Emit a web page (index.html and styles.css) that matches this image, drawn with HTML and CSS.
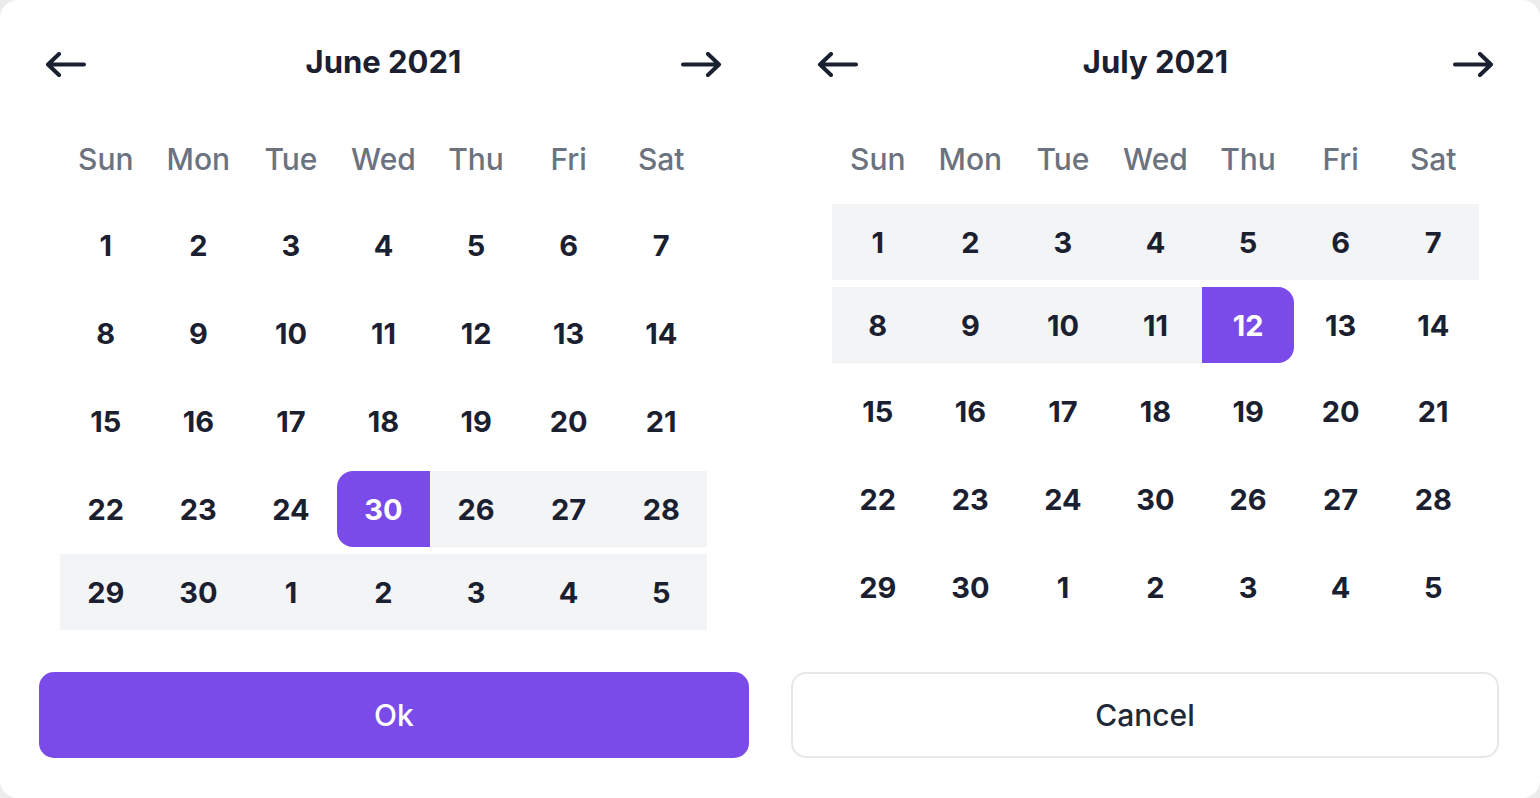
FILE: index.html
```html
<!DOCTYPE html>
<html lang="en">
<head>
<meta charset="utf-8">
<title>Date range picker</title>
<link rel="stylesheet" href="styles.css">
</head>
<body>
<div class="card">
  <div class="panels">
    <section class="panel">
      <header class="head">
        <button class="nav" aria-label="Previous month"><svg viewBox="0 0 42 25" width="42" height="25"><path d="M40 12.5H4M15 2L4 12.5L15 23" fill="none" stroke="#1a2030" stroke-width="4" stroke-linecap="round" stroke-linejoin="round"/></svg></button>
        <h2 class="title">June 2021</h2>
        <button class="nav" aria-label="Next month"><svg viewBox="0 0 42 25" width="42" height="25"><path d="M2 12.5H38M27 2L38 12.5L27 23" fill="none" stroke="#1a2030" stroke-width="4" stroke-linecap="round" stroke-linejoin="round"/></svg></button>
      </header>
      <div class="dows"><span>Sun</span><span>Mon</span><span>Tue</span><span>Wed</span><span>Thu</span><span>Fri</span><span>Sat</span></div>
      <div class="weeks">
        <div class="week"><span>1</span><span>2</span><span>3</span><span>4</span><span>5</span><span>6</span><span>7</span></div>
        <div class="week"><span>8</span><span>9</span><span>10</span><span>11</span><span>12</span><span>13</span><span>14</span></div>
        <div class="week"><span>15</span><span>16</span><span>17</span><span>18</span><span>19</span><span>20</span><span>21</span></div>
        <div class="week range-week"><span>22</span><span>23</span><span>24</span><span class="sel start">30</span><span class="in">26</span><span class="in">27</span><span class="in">28</span></div>
        <div class="week range-week"><span class="in">29</span><span class="in">30</span><span class="in">1</span><span class="in">2</span><span class="in">3</span><span class="in">4</span><span class="in">5</span></div>
      </div>
    </section>
    <section class="panel">
      <header class="head">
        <button class="nav" aria-label="Previous month"><svg viewBox="0 0 42 25" width="42" height="25"><path d="M40 12.5H4M15 2L4 12.5L15 23" fill="none" stroke="#1a2030" stroke-width="4" stroke-linecap="round" stroke-linejoin="round"/></svg></button>
        <h2 class="title">July 2021</h2>
        <button class="nav" aria-label="Next month"><svg viewBox="0 0 42 25" width="42" height="25"><path d="M2 12.5H38M27 2L38 12.5L27 23" fill="none" stroke="#1a2030" stroke-width="4" stroke-linecap="round" stroke-linejoin="round"/></svg></button>
      </header>
      <div class="dows"><span>Sun</span><span>Mon</span><span>Tue</span><span>Wed</span><span>Thu</span><span>Fri</span><span>Sat</span></div>
      <div class="weeks july">
        <div class="week range-week"><span class="in">1</span><span class="in">2</span><span class="in">3</span><span class="in">4</span><span class="in">5</span><span class="in">6</span><span class="in">7</span></div>
        <div class="week range-week"><span class="in">8</span><span class="in">9</span><span class="in">10</span><span class="in">11</span><span class="sel end">12</span><span>13</span><span>14</span></div>
        <div class="week"><span>15</span><span>16</span><span>17</span><span>18</span><span>19</span><span>20</span><span>21</span></div>
        <div class="week"><span>22</span><span>23</span><span>24</span><span>30</span><span>26</span><span>27</span><span>28</span></div>
        <div class="week"><span>29</span><span>30</span><span>1</span><span>2</span><span>3</span><span>4</span><span>5</span></div>
      </div>
    </section>
  </div>
  <div class="actions">
    <button class="btn btn-primary">Ok</button>
    <button class="btn btn-outline">Cancel</button>
  </div>
</div>
</body>
</html>
```
FILE: styles.css
```css
* { box-sizing: border-box; }
html, body { margin: 0; padding: 0; }
body {
  background: #ececec;
  font-family: Inter, "Noto Sans", "Liberation Sans", sans-serif;
  color: #1a2030;
  width: 1540px;
  height: 798px;
  overflow: hidden;
}
.card {
  background: #fff;
  width: 1540px;
  height: 798px;
  border-radius: 18px;
  padding: 39px 41px 0 39px;
}
.panels {
  display: flex;
  gap: 93px;
  padding-left: 5px;
  height: 633px;
}
.panel {
  width: 679px;
  display: flex;
  flex-direction: column;
  align-items: center;
}
.head {
  width: 100%;
  height: 50px;
  display: flex;
  align-items: center;
  justify-content: space-between;
}
.nav {
  border: 0;
  background: none;
  padding: 0;
  width: 42px;
  height: 25px;
  display: flex;
}
.title {
  margin: 0 0 6px;
  font-size: 31px;
  font-weight: 700;
  letter-spacing: 0;
  color: #1a2030;
}
.dows {
  margin-top: 50px;
  width: 648px;
  display: grid;
  grid-template-columns: repeat(7, 1fr);
  height: 40px;
  align-items: center;
}
.dows span {
  text-align: center;
  font-size: 30px;
  font-weight: 500;
  color: #6b7280;
}
.weeks {
  margin-top: 28px;
  width: 648px;
  display: flex;
  flex-direction: column;
  gap: 12px;
}
.weeks.july { margin-top: 25px; }
.week {
  display: grid;
  grid-template-columns: repeat(7, 1fr);
  height: 76px;
}
.range-week + .range-week { margin-top: -5px; }
.range-week + .week:not(.range-week) { margin-top: -2px; }
.week span {
  display: flex;
  align-items: center;
  justify-content: center;
  font-size: 29px;
  font-weight: 700;
  color: #1a2030;
}
.week .in { background: #f3f4f6; }
.week .sel { background: #7b4bea; color: #fff; }
.week .sel.start { border-radius: 16px 0 0 16px; }
.week .sel.end { border-radius: 0 16px 16px 0; }
.actions {
  display: flex;
  gap: 42px;
}
.btn {
  height: 86px;
  border-radius: 15px;
  font-family: Inter, "Noto Sans", "Liberation Sans", sans-serif;
  font-size: 30px;
  font-weight: 500;
  padding: 0;
}
.btn-primary {
  width: 710px;
  background: #7b4bea;
  border: 0;
  color: #fff;
}
.btn-outline {
  width: 708px;
  background: #fff;
  border: 2px solid #e5e7eb;
  color: #1f2937;
}
```
